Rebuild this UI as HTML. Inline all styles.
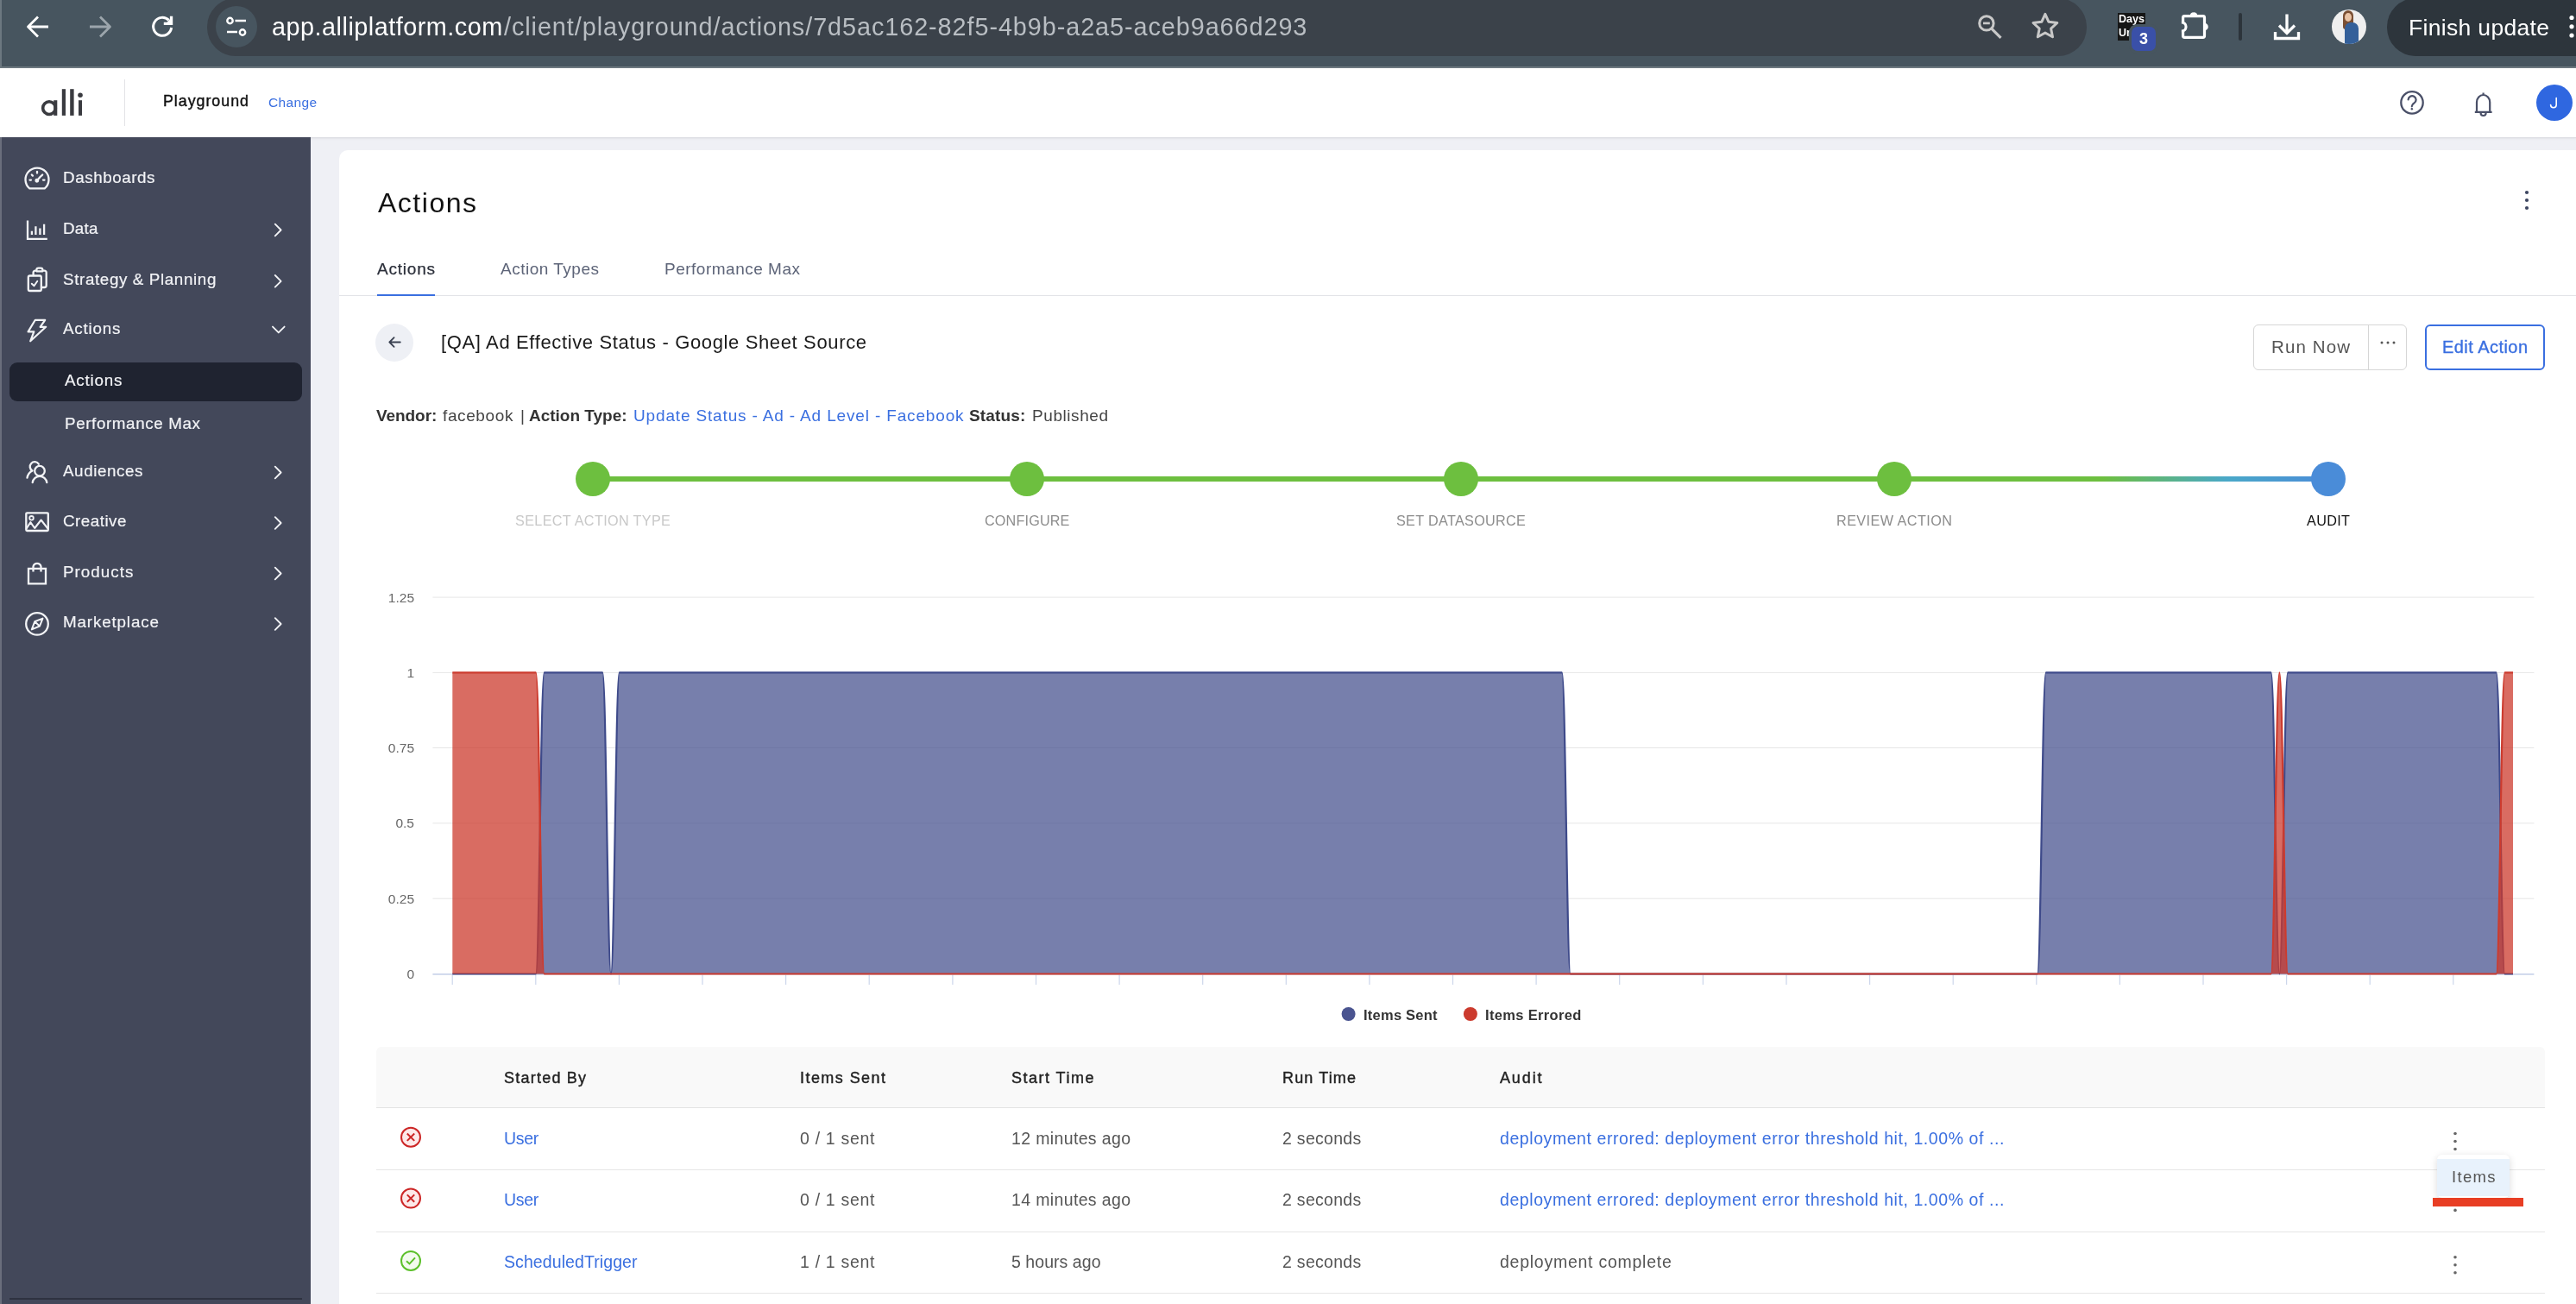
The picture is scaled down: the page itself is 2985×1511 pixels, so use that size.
<!DOCTYPE html><html><head><meta charset="utf-8"><style>
*{margin:0;padding:0;box-sizing:border-box}
html,body{width:2985px;height:1511px;overflow:hidden;background:#eff0f5;font-family:"Liberation Sans",sans-serif}
.t{position:absolute;white-space:nowrap;line-height:1;will-change:transform}
.abs{position:absolute}
svg{position:absolute;left:0;top:0}
</style></head><body>
<div class="abs" style="left:0;top:0;width:2985px;height:78px;background:#47555f"></div>
<div class="abs" style="left:0;top:77px;width:2985px;height:2px;background:#6d7980"></div>
<div class="abs" style="left:0;top:0;width:2px;height:78px;background:#6c7880"></div>
<div class="abs" style="left:240px;top:-2px;width:2178px;height:66.5px;background:#3b424a;border-radius:33px"></div>
<div class="abs" style="left:250px;top:7px;width:48px;height:48px;border-radius:50%;background:#47555f"></div>
<div class="abs" style="left:2766px;top:-2px;width:260px;height:66.5px;background:#2d353c;border-radius:33px"></div>
<div class="t" style="left:314.5px;top:16.7px;font-size:28.80px;color:#fff;font-weight:400;letter-spacing:0.504px;">app.alliplatform.com</div>
<div class="t" style="left:583.5px;top:16.7px;font-size:28.80px;color:#b9bec3;font-weight:400;letter-spacing:0.932px;">/client/playground/actions/7d5ac162-82f5-4b9b-a2a5-aceb9a66d293</div>
<div class="t" style="left:2790.5px;top:18.6px;font-size:26.50px;color:#fff;font-weight:400;letter-spacing:0.324px;">Finish update</div>
<div class="abs" style="left:2454px;top:15px;width:32px;height:32px;background:#161616"></div>
<div class="t" style="left:2455.0px;top:16.1px;font-size:12.50px;color:#fff;font-weight:700;letter-spacing:0.039px;">Days</div>
<div class="t" style="left:2455.0px;top:31.6px;font-size:12.50px;color:#fff;font-weight:700;letter-spacing:0.000px;">Ur</div>
<div class="abs" style="left:2467px;top:28px;width:34px;height:34px;border-radius:9px;background:#47555f"></div>
<div class="abs" style="left:2470px;top:31px;width:28px;height:28px;border-radius:7px;background:#3a50a8"></div>
<div class="t" style="left:2478.5px;top:36.0px;font-size:18.00px;color:#fff;font-weight:700;letter-spacing:0.000px;">3</div>
<div class="abs" style="left:2702px;top:11px;width:40px;height:40px;border-radius:50%;background:#efefef;overflow:hidden"><div class="abs" style="left:13px;top:1px;width:12px;height:22px;border-radius:6px 6px 3px 3px;background:#7a4f33"></div><div class="abs" style="left:15px;top:4px;width:8px;height:10px;border-radius:50%;background:#e9c3a5"></div><div class="abs" style="left:15px;top:15px;width:16px;height:28px;border-radius:7px 7px 0 0;background:#34609a"></div></div>
<div class="abs" style="left:0;top:79px;width:2985px;height:81px;background:#fff;border-bottom:1px solid #dcdde3;box-shadow:0 1px 2px rgba(0,0,0,0.06)"></div>
<div class="abs" style="left:144px;top:92px;width:1px;height:54px;background:#e3e3e6"></div>
<div class="t" style="left:189.0px;top:109.1px;font-size:17.80px;color:#111;font-weight:400;letter-spacing:0.994px;-webkit-text-stroke:0.4px #111;">Playground</div>
<div class="t" style="left:311.0px;top:111.1px;font-size:15.50px;color:#3a6fe0;font-weight:400;letter-spacing:0.341px;">Change</div>
<div class="abs" style="left:2939px;top:98px;width:42px;height:42px;border-radius:50%;background:#2f67e0"></div>
<div class="abs" style="left:0;top:159px;width:360px;height:1352px;background:#43485a"></div>
<div class="abs" style="left:0;top:159px;width:2px;height:1352px;background:#6a6e7c"></div>
<div class="abs" style="left:11px;top:1504px;width:339px;height:2px;background:#2e3240"></div>
<div class="abs" style="left:11px;top:420px;width:339px;height:45px;background:#1f2330;border-radius:9px"></div>
<div class="t" style="left:73.0px;top:196.5px;font-size:18.80px;color:#f2f3f6;font-weight:400;letter-spacing:0.581px;-webkit-text-stroke:0.2px #f2f3f6;">Dashboards</div>
<div class="t" style="left:73.0px;top:255.6px;font-size:18.80px;color:#f2f3f6;font-weight:400;letter-spacing:0.263px;-webkit-text-stroke:0.2px #f2f3f6;">Data</div>
<div class="t" style="left:73.0px;top:314.9px;font-size:18.80px;color:#f2f3f6;font-weight:400;letter-spacing:0.629px;-webkit-text-stroke:0.2px #f2f3f6;">Strategy &amp; Planning</div>
<div class="t" style="left:73.0px;top:372.1px;font-size:18.80px;color:#f2f3f6;font-weight:400;letter-spacing:0.808px;-webkit-text-stroke:0.2px #f2f3f6;">Actions</div>
<div class="t" style="left:73.0px;top:536.6px;font-size:18.80px;color:#f2f3f6;font-weight:400;letter-spacing:0.588px;-webkit-text-stroke:0.2px #f2f3f6;">Audiences</div>
<div class="t" style="left:73.0px;top:595.1px;font-size:18.80px;color:#f2f3f6;font-weight:400;letter-spacing:0.499px;-webkit-text-stroke:0.2px #f2f3f6;">Creative</div>
<div class="t" style="left:73.0px;top:653.6px;font-size:18.80px;color:#f2f3f6;font-weight:400;letter-spacing:1.044px;-webkit-text-stroke:0.2px #f2f3f6;">Products</div>
<div class="t" style="left:73.0px;top:712.1px;font-size:18.80px;color:#f2f3f6;font-weight:400;letter-spacing:0.860px;-webkit-text-stroke:0.2px #f2f3f6;">Marketplace</div>
<div class="t" style="left:75.0px;top:432.1px;font-size:18.80px;color:#f2f3f6;font-weight:400;letter-spacing:0.808px;-webkit-text-stroke:0.2px #f2f3f6;">Actions</div>
<div class="t" style="left:75.0px;top:482.1px;font-size:18.80px;color:#f2f3f6;font-weight:400;letter-spacing:0.617px;-webkit-text-stroke:0.2px #f2f3f6;">Performance Max</div>
<div class="abs" style="left:393px;top:174px;width:2700px;height:1400px;background:#fff;border-radius:10px"></div>
<div class="t" style="left:437.5px;top:219.4px;font-size:32.00px;color:#111;font-weight:400;letter-spacing:1.510px;">Actions</div>
<div class="t" style="left:437.0px;top:302.4px;font-size:19.00px;color:#2b2f3a;font-weight:400;letter-spacing:0.782px;-webkit-text-stroke:0.25px #2b2f3a;">Actions</div>
<div class="t" style="left:579.6px;top:302.4px;font-size:19.00px;color:#5d6478;font-weight:400;letter-spacing:0.506px;">Action Types</div>
<div class="t" style="left:769.8px;top:302.4px;font-size:19.00px;color:#5d6478;font-weight:400;letter-spacing:0.504px;">Performance Max</div>
<div class="abs" style="left:393px;top:342px;width:2592px;height:1px;background:#e2e3e8"></div>
<div class="abs" style="left:437px;top:340.5px;width:67px;height:2.5px;background:#3a6fe0"></div>
<div class="abs" style="left:435px;top:375px;width:44px;height:44px;border-radius:50%;background:#eef0f5"></div>
<div class="t" style="left:510.8px;top:386.0px;font-size:22.00px;color:#1a1a1a;font-weight:400;letter-spacing:0.638px;">[QA] Ad Effective Status - Google Sheet Source</div>
<div class="t" style="left:436.4px;top:472.3px;font-size:19.00px;color:#333;font-weight:700;letter-spacing:-0.072px;">Vendor:</div>
<div class="t" style="left:513.3px;top:472.3px;font-size:19.00px;color:#444;font-weight:400;letter-spacing:0.612px;">facebook</div>
<div class="t" style="left:603.0px;top:472.3px;font-size:19.00px;color:#444;font-weight:400;letter-spacing:0.000px;">|</div>
<div class="t" style="left:613.2px;top:472.3px;font-size:19.00px;color:#333;font-weight:700;letter-spacing:-0.005px;">Action Type:</div>
<div class="t" style="left:733.8px;top:472.3px;font-size:19.00px;color:#3a6fe0;font-weight:400;letter-spacing:0.846px;">Update Status - Ad - Ad Level - Facebook</div>
<div class="t" style="left:1123.4px;top:472.3px;font-size:19.00px;color:#333;font-weight:700;letter-spacing:0.150px;">Status:</div>
<div class="t" style="left:1195.7px;top:472.3px;font-size:19.00px;color:#444;font-weight:400;letter-spacing:0.568px;">Published</div>
<div class="abs" style="left:2610.5px;top:375.5px;width:178px;height:53px;border:1.5px solid #d6d6d6;border-radius:6px"></div>
<div class="abs" style="left:2743.5px;top:376px;width:1px;height:52px;background:#d6d6d6"></div>
<div class="t" style="left:2632.0px;top:391.9px;font-size:20.50px;color:#555;font-weight:400;letter-spacing:1.114px;">Run Now</div>
<div class="abs" style="left:2810px;top:375.5px;width:139px;height:53px;border:2px solid #3a6fe0;border-radius:6px"></div>
<div class="t" style="left:2830.0px;top:392.4px;font-size:20.00px;color:#3a6fe0;font-weight:400;letter-spacing:0.450px;-webkit-text-stroke:0.35px #3a6fe0;">Edit Action</div>
<div class="abs" style="left:686px;top:552px;width:1750px;height:6px;background:#6dbf3f"></div>
<div class="abs" style="left:2436px;top:552px;width:262px;height:6px;background:linear-gradient(90deg,#6dbf3f 0%,#4aa8c8 55%,#4a8cd8 100%)"></div>
<div class="abs" style="left:666.6px;top:535px;width:40px;height:40px;border-radius:50%;background:#6dbf3f"></div>
<div class="abs" style="left:1169.7px;top:535px;width:40px;height:40px;border-radius:50%;background:#6dbf3f"></div>
<div class="abs" style="left:1672.7px;top:535px;width:40px;height:40px;border-radius:50%;background:#6dbf3f"></div>
<div class="abs" style="left:2174.8px;top:535px;width:40px;height:40px;border-radius:50%;background:#6dbf3f"></div>
<div class="abs" style="left:2677.8px;top:535px;width:40px;height:40px;border-radius:50%;background:#4a8cd8"></div>
<div class="t" style="left:596.6px;top:595.3px;font-size:16.20px;color:#c8c8c8;font-weight:400;letter-spacing:0.349px;">SELECT ACTION TYPE</div>
<div class="t" style="left:1140.5px;top:595.3px;font-size:16.20px;color:#8c8c8c;font-weight:400;letter-spacing:0.162px;">CONFIGURE</div>
<div class="t" style="left:1617.7px;top:595.3px;font-size:16.20px;color:#8c8c8c;font-weight:400;letter-spacing:0.321px;">SET DATASOURCE</div>
<div class="t" style="left:2127.8px;top:595.3px;font-size:16.20px;color:#8c8c8c;font-weight:400;letter-spacing:0.440px;">REVIEW ACTION</div>
<div class="t" style="left:2672.8px;top:595.3px;font-size:16.20px;color:#111;font-weight:400;letter-spacing:0.350px;">AUDIT</div>
<svg width="2985" height="1511" viewBox="0 0 2985 1511">
<rect x="501.4" y="691.6" width="2435" height="1" fill="#e6e6e6"/>
<rect x="501.4" y="778.9" width="2435" height="1" fill="#e6e6e6"/>
<rect x="501.4" y="866.1" width="2435" height="1" fill="#e6e6e6"/>
<rect x="501.4" y="953.4" width="2435" height="1" fill="#e6e6e6"/>
<rect x="501.4" y="1040.7" width="2435" height="1" fill="#e6e6e6"/>
<rect x="501.4" y="1128" width="2435" height="1.8" fill="#ccd6eb"/>
<rect x="523.6" y="1128" width="1.2" height="13" fill="#ccd6eb"/>
<rect x="620.2" y="1128" width="1.2" height="13" fill="#ccd6eb"/>
<rect x="716.8" y="1128" width="1.2" height="13" fill="#ccd6eb"/>
<rect x="813.4" y="1128" width="1.2" height="13" fill="#ccd6eb"/>
<rect x="910.0" y="1128" width="1.2" height="13" fill="#ccd6eb"/>
<rect x="1006.6" y="1128" width="1.2" height="13" fill="#ccd6eb"/>
<rect x="1103.3" y="1128" width="1.2" height="13" fill="#ccd6eb"/>
<rect x="1199.9" y="1128" width="1.2" height="13" fill="#ccd6eb"/>
<rect x="1296.5" y="1128" width="1.2" height="13" fill="#ccd6eb"/>
<rect x="1393.1" y="1128" width="1.2" height="13" fill="#ccd6eb"/>
<rect x="1489.7" y="1128" width="1.2" height="13" fill="#ccd6eb"/>
<rect x="1586.3" y="1128" width="1.2" height="13" fill="#ccd6eb"/>
<rect x="1682.9" y="1128" width="1.2" height="13" fill="#ccd6eb"/>
<rect x="1779.5" y="1128" width="1.2" height="13" fill="#ccd6eb"/>
<rect x="1876.1" y="1128" width="1.2" height="13" fill="#ccd6eb"/>
<rect x="1972.8" y="1128" width="1.2" height="13" fill="#ccd6eb"/>
<rect x="2069.4" y="1128" width="1.2" height="13" fill="#ccd6eb"/>
<rect x="2166.0" y="1128" width="1.2" height="13" fill="#ccd6eb"/>
<rect x="2262.6" y="1128" width="1.2" height="13" fill="#ccd6eb"/>
<rect x="2359.2" y="1128" width="1.2" height="13" fill="#ccd6eb"/>
<rect x="2455.8" y="1128" width="1.2" height="13" fill="#ccd6eb"/>
<rect x="2552.4" y="1128" width="1.2" height="13" fill="#ccd6eb"/>
<rect x="2649.0" y="1128" width="1.2" height="13" fill="#ccd6eb"/>
<rect x="2745.6" y="1128" width="1.2" height="13" fill="#ccd6eb"/>
<rect x="2842.2" y="1128" width="1.2" height="13" fill="#ccd6eb"/>
<path d="M524.3 1128.5 L621.0 1128.5 C624.8 1128.5 626.8 779.4 630.6 779.4 L698.3 779.4 C702.2 779.4 704.1 1128.5 708.0 1128.5 C711.8 1128.5 713.8 779.4 717.6 779.4 L1810.0 779.4 C1813.9 779.4 1815.8 1128.5 1819.7 1128.5 L2361.0 1128.5 C2364.9 1128.5 2366.8 779.4 2370.7 779.4 L2631.7 779.4 C2635.6 779.4 2637.5 1128.5 2641.4 1128.5 C2645.2 1128.5 2647.2 779.4 2651.0 779.4 L2892.7 779.4 C2896.6 779.4 2898.5 1128.5 2902.4 1128.5 L2912.0 1128.5 L2912.0 1128.5 L524.3 1128.5 Z" fill="#4a5490" fill-opacity="0.75"/>
<path d="M524.3 1128.5 L621.0 1128.5 C624.8 1128.5 626.8 779.4 630.6 779.4 L698.3 779.4 C702.2 779.4 704.1 1128.5 708.0 1128.5 C711.8 1128.5 713.8 779.4 717.6 779.4 L1810.0 779.4 C1813.9 779.4 1815.8 1128.5 1819.7 1128.5 L2361.0 1128.5 C2364.9 1128.5 2366.8 779.4 2370.7 779.4 L2631.7 779.4 C2635.6 779.4 2637.5 1128.5 2641.4 1128.5 C2645.2 1128.5 2647.2 779.4 2651.0 779.4 L2892.7 779.4 C2896.6 779.4 2898.5 1128.5 2902.4 1128.5 L2912.0 1128.5" fill="none" stroke="#3e4a8a" stroke-width="2.2"/>
<path d="M524.3 779.4 L621.0 779.4 C624.8 779.4 626.8 1128.5 630.6 1128.5 L2631.7 1128.5 C2635.6 1128.5 2637.5 779.4 2641.4 779.4 C2645.2 779.4 2647.2 1128.5 2651.0 1128.5 L2892.7 1128.5 C2896.6 1128.5 2898.5 779.4 2902.4 779.4 L2912.0 779.4 L2912.0 1128.5 L524.3 1128.5 Z" fill="#cc3b2e" fill-opacity="0.75"/>
<path d="M524.3 779.4 L621.0 779.4 C624.8 779.4 626.8 1128.5 630.6 1128.5 L2631.7 1128.5 C2635.6 1128.5 2637.5 779.4 2641.4 779.4 C2645.2 779.4 2647.2 1128.5 2651.0 1128.5 L2892.7 1128.5 C2896.6 1128.5 2898.5 779.4 2902.4 779.4 L2912.0 779.4" fill="none" stroke="#cc3b2e" stroke-width="2.2"/>
<circle cx="1562.6" cy="1175" r="8" fill="#4a5490"/><circle cx="1703.9" cy="1175" r="8" fill="#cc3b2e"/>
</svg>
<div class="t" style="left:380px;top:684.5px;width:100px;text-align:right;font-size:15.5px;color:#666">1.25</div>
<div class="t" style="left:380px;top:771.8px;width:100px;text-align:right;font-size:15.5px;color:#666">1</div>
<div class="t" style="left:380px;top:859.0px;width:100px;text-align:right;font-size:15.5px;color:#666">0.75</div>
<div class="t" style="left:380px;top:946.3px;width:100px;text-align:right;font-size:15.5px;color:#666">0.5</div>
<div class="t" style="left:380px;top:1033.6px;width:100px;text-align:right;font-size:15.5px;color:#666">0.25</div>
<div class="t" style="left:380px;top:1120.9px;width:100px;text-align:right;font-size:15.5px;color:#666">0</div>
<div class="t" style="left:1580.4px;top:1168.0px;font-size:16.50px;color:#333;font-weight:700;letter-spacing:0.239px;">Items Sent</div>
<div class="t" style="left:1721.0px;top:1168.0px;font-size:16.50px;color:#333;font-weight:700;letter-spacing:0.334px;">Items Errored</div>
<div class="abs" style="left:436px;top:1213px;width:2513px;height:70.5px;background:#f9f9f9;border-radius:6px 6px 0 0;border-bottom:1.5px solid #e4e4e4"></div>
<div class="abs" style="left:436px;top:1355.2px;width:2513px;height:1.2px;background:#e6e6e6"></div>
<div class="abs" style="left:436px;top:1427.2px;width:2513px;height:1.2px;background:#e6e6e6"></div>
<div class="abs" style="left:436px;top:1498.2px;width:2513px;height:1.2px;background:#e6e6e6"></div>
<div class="t" style="left:583.5px;top:1239.7px;font-size:18.00px;color:#222;font-weight:400;letter-spacing:1.229px;-webkit-text-stroke:0.4px #222;">Started By</div>
<div class="t" style="left:926.6px;top:1239.7px;font-size:18.00px;color:#222;font-weight:400;letter-spacing:1.440px;-webkit-text-stroke:0.4px #222;">Items Sent</div>
<div class="t" style="left:1172.0px;top:1239.7px;font-size:18.00px;color:#222;font-weight:400;letter-spacing:1.486px;-webkit-text-stroke:0.4px #222;">Start Time</div>
<div class="t" style="left:1486.2px;top:1239.7px;font-size:18.00px;color:#222;font-weight:400;letter-spacing:1.139px;-webkit-text-stroke:0.4px #222;">Run Time</div>
<div class="t" style="left:1737.7px;top:1239.7px;font-size:18.00px;color:#222;font-weight:400;letter-spacing:1.868px;-webkit-text-stroke:0.4px #222;">Audit</div>
<div class="t" style="left:583.5px;top:1310.0px;font-size:19.50px;color:#3a6fe0;font-weight:400;letter-spacing:-0.324px;">User</div>
<div class="t" style="left:926.6px;top:1310.0px;font-size:19.50px;color:#555;font-weight:400;letter-spacing:0.687px;">0 / 1 sent</div>
<div class="t" style="left:1172.0px;top:1310.0px;font-size:19.50px;color:#555;font-weight:400;letter-spacing:0.358px;">12 minutes ago</div>
<div class="t" style="left:1486.2px;top:1310.0px;font-size:19.50px;color:#555;font-weight:400;letter-spacing:0.288px;">2 seconds</div>
<div class="t" style="left:1737.7px;top:1310.0px;font-size:19.50px;color:#3a6fe0;font-weight:400;letter-spacing:0.569px;">deployment errored: deployment error threshold hit, 1.00% of ...</div>
<div class="t" style="left:583.5px;top:1380.9px;font-size:19.50px;color:#3a6fe0;font-weight:400;letter-spacing:-0.324px;">User</div>
<div class="t" style="left:926.6px;top:1380.9px;font-size:19.50px;color:#555;font-weight:400;letter-spacing:0.687px;">0 / 1 sent</div>
<div class="t" style="left:1172.0px;top:1380.9px;font-size:19.50px;color:#555;font-weight:400;letter-spacing:0.358px;">14 minutes ago</div>
<div class="t" style="left:1486.2px;top:1380.9px;font-size:19.50px;color:#555;font-weight:400;letter-spacing:0.288px;">2 seconds</div>
<div class="t" style="left:1737.7px;top:1380.9px;font-size:19.50px;color:#3a6fe0;font-weight:400;letter-spacing:0.569px;">deployment errored: deployment error threshold hit, 1.00% of ...</div>
<div class="t" style="left:583.5px;top:1453.2px;font-size:19.50px;color:#3a6fe0;font-weight:400;letter-spacing:0.086px;">ScheduledTrigger</div>
<div class="t" style="left:926.6px;top:1453.2px;font-size:19.50px;color:#555;font-weight:400;letter-spacing:0.687px;">1 / 1 sent</div>
<div class="t" style="left:1172.0px;top:1453.2px;font-size:19.50px;color:#555;font-weight:400;letter-spacing:0.050px;">5 hours ago</div>
<div class="t" style="left:1486.2px;top:1453.2px;font-size:19.50px;color:#555;font-weight:400;letter-spacing:0.288px;">2 seconds</div>
<div class="t" style="left:1737.7px;top:1453.2px;font-size:19.50px;color:#555;font-weight:400;letter-spacing:0.747px;">deployment complete</div>
<svg width="2985" height="1511" viewBox="0 0 2985 1511">
<circle cx="476" cy="1317.7" r="11" fill="#fde9e9" stroke="#cc2626" stroke-width="2"/><path d="M471.8 1313.5L480.2 1321.9M480.2 1313.5L471.8 1321.9" stroke="#cc2626" stroke-width="2"/>
<circle cx="2845" cy="1313.5" r="1.8" fill="#666"/>
<circle cx="2845" cy="1322.5" r="1.8" fill="#666"/>
<circle cx="2845" cy="1331.5" r="1.8" fill="#666"/>
<circle cx="476" cy="1388.6" r="11" fill="#fde9e9" stroke="#cc2626" stroke-width="2"/><path d="M471.8 1384.4L480.2 1392.8M480.2 1384.4L471.8 1392.8" stroke="#cc2626" stroke-width="2"/>
<circle cx="2845" cy="1384.4" r="1.8" fill="#666"/>
<circle cx="2845" cy="1393.4" r="1.8" fill="#666"/>
<circle cx="2845" cy="1402.4" r="1.8" fill="#666"/>
<circle cx="476" cy="1460.9" r="11" fill="#f3fbee" stroke="#5cc02a" stroke-width="2"/><path d="M471 1461.2L474.5 1464.4L481 1457.4" fill="none" stroke="#5cc02a" stroke-width="2"/>
<circle cx="2845" cy="1456.7" r="1.8" fill="#666"/>
<circle cx="2845" cy="1465.7" r="1.8" fill="#666"/>
<circle cx="2845" cy="1474.7" r="1.8" fill="#666"/>
</svg>
<div class="abs" style="left:2824px;top:1338px;width:84px;height:50px;background:#fff;border-radius:6px;box-shadow:0 2px 8px rgba(0,0,0,0.15)"></div>
<div class="abs" style="left:2824px;top:1343px;width:84px;height:43px;background:#e8f2fc"></div>
<div class="t" style="left:2841.0px;top:1354.6px;font-size:18.50px;color:#555;font-weight:400;letter-spacing:1.318px;">Items</div>
<div class="abs" style="left:2819px;top:1388px;width:105px;height:10px;background:#e83e24"></div>
<svg width="2985" height="1511" viewBox="0 0 2985 1511" fill="none" stroke-linecap="round" stroke-linejoin="round">
<path d="M56 31H33M44 19.5L32.5 31L44 42.5" stroke="#fff" stroke-width="2.8" stroke-linecap="butt"/>
<path d="M104 31H127M116 19.5L127.5 31L116 42.5" stroke="#9ca5ac" stroke-width="2.8" stroke-linecap="butt"/>
<path d="M195.6 23.4A10.5 10.5 0 1 0 198.6 32" stroke="#fff" stroke-width="3" stroke-linecap="butt"/><path d="M200.2 18.8V29.1H189.8V25.8H193.5L196.9 22.3V18.8Z" fill="#fff" stroke="none"/>
<circle cx="266.5" cy="24" r="3.2" stroke="#fff" stroke-width="2.4"/><path d="M272.5 24H285M263 37H275" stroke="#fff" stroke-width="2.4" stroke-linecap="butt"/><circle cx="281" cy="37.5" r="3.2" stroke="#fff" stroke-width="2.4"/>
<circle cx="2301.9" cy="26.9" r="8.2" stroke="#c8c8c8" stroke-width="3"/><path d="M2298 26.9H2305.8" stroke="#c8c8c8" stroke-width="2.7" stroke-linecap="butt"/><path d="M2308 33.3L2318.5 43.8" stroke="#c8c8c8" stroke-width="3.2" stroke-linecap="butt"/>
<path d="M2369.9 16.4L2374.0 25.3L2383.8 26.5L2376.6 33.2L2378.5 42.8L2369.9 38.0L2361.3 42.8L2363.2 33.2L2356.0 26.5L2365.8 25.3Z" stroke="#c8c8c8" stroke-width="3"/>
<rect x="2529.6" y="18.6" width="24.9" height="24.8" rx="1.8" stroke="#fff" stroke-width="3.2"/><path d="M2537.8 18.5A4.2 4.2 0 0 1 2546.2 18.5Z" fill="#fff" stroke="none"/><path d="M2554.5 26.7A4.3 4.3 0 0 1 2554.5 35.3Z" fill="#fff" stroke="none"/><circle cx="2528" cy="31" r="6.6" fill="#fff" stroke="none"/><circle cx="2528" cy="31" r="3.5" fill="#47555f" stroke="none"/><rect x="2518" y="22" width="9.9" height="18" fill="#47555f" stroke="none"/>
<path d="M2596 17V45" stroke="#2c343b" stroke-width="4"/>
<path d="M2650 16.5V38M2641 29.5L2650 38.5L2659 29.5M2636.5 37V44.5H2663.5V37" stroke="#fff" stroke-width="3.3" stroke-linecap="butt" stroke-linejoin="miter"/>
<circle cx="2980" cy="20.5" r="2.6" fill="#fff" stroke="none"/>
<circle cx="2980" cy="30.8" r="2.6" fill="#fff" stroke="none"/>
<circle cx="2980" cy="41.0" r="2.6" fill="#fff" stroke="none"/>
<g fill="#3a3b40" stroke="none"><path fill-rule="evenodd" d="M57 116A9.1 9.1 0 1 0 57 134.3A9.1 9.1 0 1 0 57 116ZM57 119.6A5.5 5.5 0 1 1 57 130.7A5.5 5.5 0 1 1 57 119.6Z"/><rect x="62.2" y="116.2" width="4.1" height="17.7"/><rect x="71.8" y="103.2" width="4.2" height="30.7"/><rect x="81.2" y="103.2" width="4.4" height="30.7"/><rect x="91" y="116.2" width="4" height="17.7"/><circle cx="93" cy="110.2" r="2.8"/></g>
<circle cx="2795" cy="118.9" r="12.7" stroke="#4a5068" stroke-width="2.3"/><path d="M2790.6 115.5A4.5 4.5 0 1 1 2797.5 119.4C2795.5 120.8 2794.8 121.8 2794.8 123.3" stroke="#4a5068" stroke-width="2.2"/><circle cx="2794.8" cy="126.3" r="1.3" fill="#4a5068" stroke="none"/>
<path d="M2877.6 107.5V110M2870 129.5V118.5A7.6 8.5 0 0 1 2885.2 118.5V129.5M2867.8 129.8H2887.6M2874.6 131A3 3 0 0 0 2880.6 131" stroke="#4a5068" stroke-width="2.2" stroke-linecap="butt"/>
<path d="M2962.2 113.5V121.5A3.3 3.3 0 0 1 2955.6 121.5" stroke="#fff" stroke-width="1.6"/>
<g stroke="#f2f3f6" stroke-width="2.3">
<path d="M34.3 218.4A13.5 13.5 0 1 1 51.7 218.4Z"/>
<path d="M43 198.8V200.6M36.8 202.5L37.9 203.6M49.2 202.5L48.1 203.6M34.5 208.6H36M51.5 208.6H50M43 209L47 204.5"/><circle cx="42.8" cy="209.2" r="1.3" fill="#f2f3f6"/>
<path d="M32 255.5V276.8H54.8M36.9 267.8V272M41.4 262.3V272M46.4 264.6V272M51.1 259.8V272" stroke-linecap="butt" stroke-linejoin="miter"/>
<rect x="32.8" y="319.5" width="15" height="17.5" rx="1.8"/><path d="M38.6 319V315.8A2.2 2.2 0 0 1 40.8 313.6H42.3M49.4 313.6H51.5A2.2 2.2 0 0 1 53.7 315.8V330.8A2.2 2.2 0 0 1 51.5 333H48M42.3 314.3V313A2.3 2.3 0 0 1 44.6 310.7H47.1A2.3 2.3 0 0 1 49.4 313V314.3Z"/><path d="M36.8 328.7L39.5 331.3L43.3 325.8" stroke-width="2"/>
<path d="M40.8 370.8H52.2L46.6 378.8H53.2L35.2 395.3L39.3 384.4H32.6Z" stroke-width="2.2"/>
<path d="M31.5 553.6A11 11 0 0 1 37.5 545.5M37.5 545.5A5.5 5.5 0 1 1 44.8 537.7" /><circle cx="46" cy="545.7" r="5.8"/><path d="M37.7 559A8.4 8.4 0 0 1 54.3 559"/>
<rect x="30.3" y="594.3" width="25.5" height="20.7" rx="1"/><circle cx="36.5" cy="600.3" r="2.3" stroke-width="1.8"/><path d="M30.8 612.2L35.3 605.2L40.2 612L47.6 602.5L55.3 612.3" stroke-width="2.1"/>
<path d="M33 658.8H53V676.3H33Z" stroke-linecap="butt" stroke-linejoin="miter"/><path d="M38.5 662.6V656.5A4.6 4.6 0 0 1 47.5 656.5V662.6" stroke-linecap="butt"/>
<circle cx="43" cy="722.9" r="12.8"/><path d="M49.5 716.6L46 725.5L36.8 729.4L40.2 720.3Z M40.2 720.3L46 725.5" stroke-width="2"/>
<path d="M318.8 259.7L325.6 266.5L318.8 273.3" stroke-width="1.9"/>
<path d="M318.8 319.0L325.6 325.8L318.8 332.6" stroke-width="1.9"/>
<path d="M318.8 540.7L325.6 547.5L318.8 554.3" stroke-width="1.9"/>
<path d="M318.8 599.2L325.6 606.0L318.8 612.8" stroke-width="1.9"/>
<path d="M318.8 657.7L325.6 664.5L318.8 671.3" stroke-width="1.9"/>
<path d="M318.8 716.2L325.6 723.0L318.8 729.8" stroke-width="1.9"/>
<path d="M316 378.6L322.8 385.4L329.6 378.6" stroke-width="1.9"/>
</g>
<path d="M463.8 396.5H451.3M456.6 391.2L451.3 396.5L456.6 401.8" stroke="#3b4252" stroke-width="1.8"/>
<circle cx="2928" cy="223" r="2.1" fill="#3d4560" stroke="none"/>
<circle cx="2928" cy="232" r="2.1" fill="#3d4560" stroke="none"/>
<circle cx="2928" cy="241" r="2.1" fill="#3d4560" stroke="none"/>
<circle cx="2760" cy="397" r="1.5" fill="#555" stroke="none"/>
<circle cx="2767" cy="397" r="1.5" fill="#555" stroke="none"/>
<circle cx="2774" cy="397" r="1.5" fill="#555" stroke="none"/>
</svg>
</body></html>
